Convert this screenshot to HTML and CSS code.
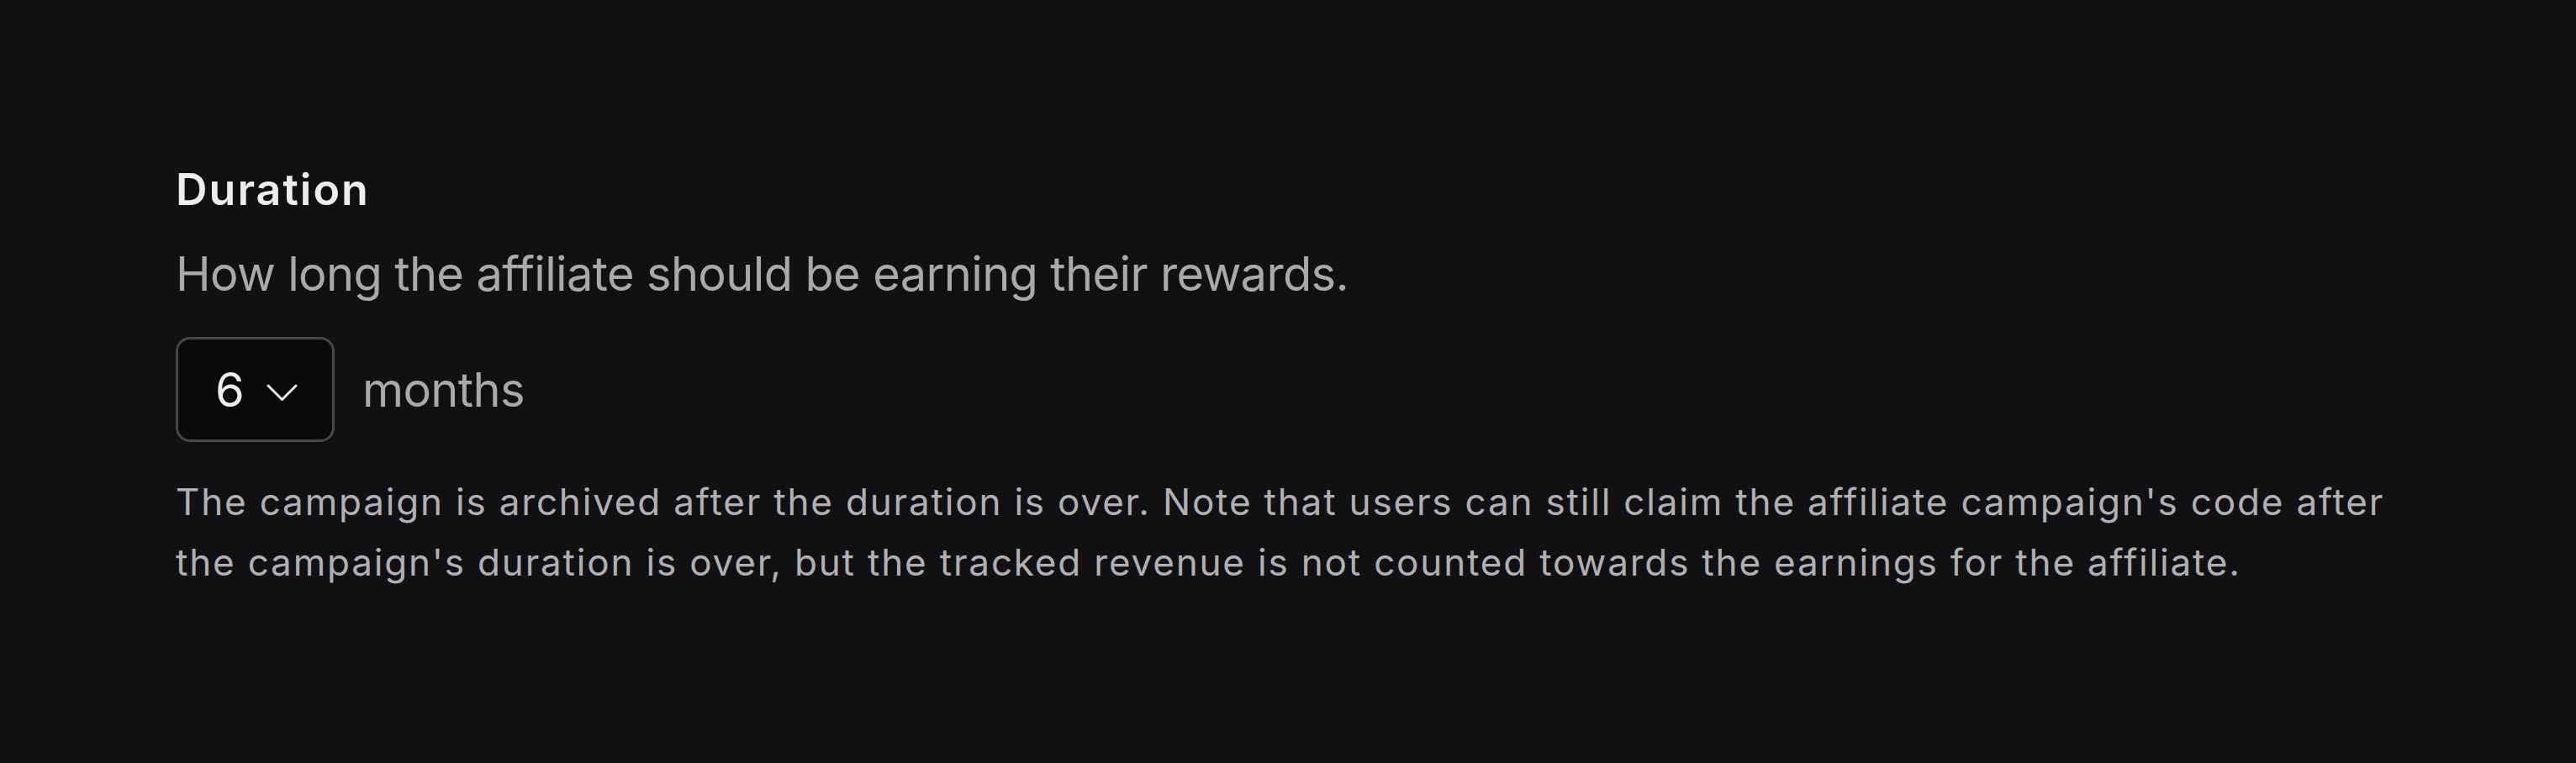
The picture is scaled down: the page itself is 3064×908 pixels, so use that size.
FILE: index.html
```html
<!DOCTYPE html>
<html lang="en">
<head>
<meta charset="utf-8">
<title>Duration</title>
<link rel="stylesheet" href="styles.css">
</head>
<body>
<section class="setting">
  <h2 class="setting-title">Duration</h2>
  <p class="setting-desc">How long the affiliate should be earning their rewards.</p>
  <div class="duration-row">
    <button class="select" type="button">
      <span class="select-value">6</span>
      <svg class="chevron" width="37" height="21" viewBox="0 0 37 21" aria-hidden="true">
        <path d="M2 2 L18.5 18.5 L35 2" fill="none" stroke="#e6e6e6" stroke-width="3" stroke-linecap="round" stroke-linejoin="round"/>
      </svg>
    </button>
    <span class="unit">months</span>
  </div>
  <p class="setting-note">The campaign is archived after the duration is over. Note that users can still claim the affiliate campaign's code after the campaign's duration is over, but the tracked revenue is not counted towards the earnings for the affiliate.</p>
</section>
</body>
</html>
```
FILE: styles.css
```css
html, body {
  margin: 0;
  padding: 0;
  background: #111113;
}
body {
  font-family: Inter, "Noto Sans", "Liberation Sans", sans-serif;
  width: 3064px;
  height: 908px;
  overflow: hidden;
}
.setting {
  display: flex;
  flex-direction: column;
  align-items: flex-start;
  padding: 194px 0 0 209px;
}
.setting-title {
  margin: 0;
  font-size: 52px;
  line-height: 64px;
  font-weight: 600;
  letter-spacing: 2px;
  color: #ededed;
}
.setting-desc {
  margin: 32px 0 0;
  font-size: 56px;
  line-height: 72px;
  font-weight: 400;
  letter-spacing: -0.65px;
  color: #a9a9ac;
}
.duration-row {
  margin-top: 39px;
  display: flex;
  align-items: center;
  gap: 33px;
}
.select {
  box-sizing: border-box;
  width: 189px;
  height: 125px;
  border: 3px solid #46464b;
  border-radius: 17px;
  background: #0a0a0b;
  display: flex;
  align-items: center;
  padding: 0 0 0 44px;
  gap: 26px;
  font-family: inherit;
  cursor: pointer;
}
.select-value {
  font-size: 56px;
  line-height: normal;
  color: #ededed;
}
.chevron {
  display: block;
  margin-top: 8px;
}
.unit {
  font-size: 56px;
  line-height: normal;
  letter-spacing: -0.65px;
  color: #a9a9ac;
}
.setting-note {
  margin: 35px 0 0;
  width: 2660px;
  font-size: 44px;
  line-height: 72px;
  letter-spacing: 1.82px;
  color: #b0b0b3;
}
```
